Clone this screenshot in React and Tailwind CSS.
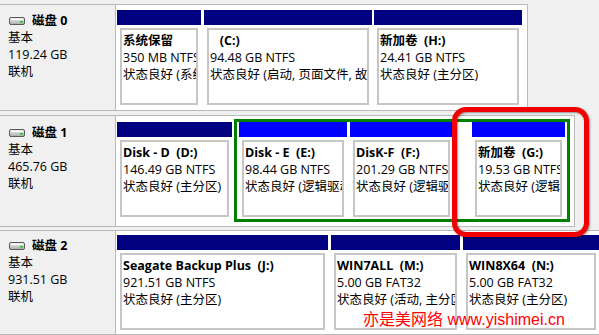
const NAVY = 'bg-[#000080]';
const BLUE = 'bg-[#0000ff]';

// small grey hard drive glyph in front of the disk name
const DriveIcon = () => (
    <svg width="16" height="8" viewBox="0 0 16 8" className="ml-[1px] shrink-0">
        <defs>
            <linearGradient id="hdd" x1="0" y1="0" x2="0" y2="1">
                <stop offset="0" stopColor="#f4f4f4" />
                <stop offset="1" stopColor="#a9a9a9" />
            </linearGradient>
        </defs>
        <rect x="0.5" y="0.5" width="15" height="7" rx="1.5" fill="url(#hdd)" stroke="#5a5a5a" />
        <line x1="2" y1="2.5" x2="14" y2="2.5" stroke="#ffffff" strokeWidth="1" />
        <rect x="11" y="4" width="3" height="1.6" fill="#36c236" />
    </svg>
);

const DiskInfo = ({ name, size, pt }) => (
    <div className={`w-[116px] shrink-0 bg-[#f0f0f0] border-r border-[#b9b9b9] pl-[8px] leading-[17px] ${pt}`}>
        <div className="flex items-center gap-[7px] h-[17px]">
            <DriveIcon />
            <span className="font-bold">{name}</span>
        </div>
        <div>基本</div>
        <div>{size}</div>
        <div>联机</div>
    </div>
);

const Partition = ({ w, bar, name, size, status, className = '' }) => (
    <div className={`flex flex-col shrink-0 bg-white ${className}`} style={{ width: w }}>
        <div className={`h-[15px] ${bar}`} />
        <div className="px-[3px] pt-[3px]">
            <div className="h-[77px] border-2 border-[#c6c6c6] pl-[1px] pt-[2px] leading-[17px] overflow-hidden whitespace-pre">
                <div className="font-bold">{name}</div>
                <div>{size}</div>
                <div>{status}</div>
            </div>
        </div>
    </div>
);

export default function App() {
    return (
        <div className="relative w-[599px] h-[335px] overflow-hidden bg-[#f0f0f0] pt-[4px] text-[12.5px] text-black font-['Open_Sans','Noto_Sans_CJK_SC',sans-serif]">
            {/* 磁盘 0 */}
            <div className="flex w-[528px] h-[107px] border-y border-r border-[#b9b9b9] bg-white">
                <DiskInfo name="磁盘 0" size="119.24 GB" pt="pt-[7px]" />
                <div className="flex items-start pl-[1px] pt-[5px]">
                    <Partition w={84} bar={NAVY} name="系统保留" size="350 MB NTFS" status="状态良好 (系统, 活动, 主分区)" />
                    <Partition w={168} bar={NAVY} className="ml-[3px]" name="   (C:)" size="94.48 GB NTFS" status="状态良好 (启动, 页面文件, 故障转储, 主分区)" />
                    <Partition w={148} bar={NAVY} className="ml-[2px]" name="新加卷  (H:)" size="24.41 GB NTFS" status="状态良好 (主分区)" />
                </div>
            </div>

            {/* 磁盘 1 */}
            <div className="flex w-[575px] h-[112px] mt-[4px] border-y border-r border-[#b9b9b9] bg-white">
                <DiskInfo name="磁盘 1" size="465.76 GB" pt="pt-[8px]" />
                <div className="flex items-start pl-[1px] pt-[3px]">
                    <Partition w={115} bar={NAVY} className="mt-[3px]" name="Disk - D  (D:)" size="146.49 GB NTFS" status="状态良好 (主分区)" />
                    <div className="flex ml-[2px] border-[3px] border-[#008000] bg-white px-[2px] pb-[2px]">
                        <Partition w={108} bar={BLUE} name="Disk - E  (E:)" size="98.44 GB NTFS" status="状态良好 (逻辑驱动器)" />
                        <Partition w={103} bar={BLUE} className="ml-[3px]" name="DisK-F  (F:)" size="201.29 GB NTFS" status="状态良好 (逻辑驱动器)" />
                        <Partition w={93} bar={BLUE} className="ml-[19px]" name="新加卷  (G:)" size="19.53 GB NTFS" status="状态良好 (逻辑驱动器)" />
                    </div>
                </div>
            </div>

            {/* 磁盘 2 */}
            <div className="flex w-[599px] h-[105px] mt-[3px] border-y border-[#b9b9b9] bg-white">
                <DiskInfo name="磁盘 2" size="931.51 GB" pt="pt-[6px]" />
                <div className="flex items-start pl-[1px] pt-[4px]">
                    <Partition w={211} bar={NAVY} name="Seagate Backup Plus  (J:)" size="921.51 GB NTFS" status="状态良好 (主分区)" />
                    <Partition w={129} bar={NAVY} className="ml-[3px]" name="WIN7ALL  (M:)" size="5.00 GB FAT32" status="状态良好 (活动, 主分区)" />
                    <Partition w={136} bar={NAVY} className="ml-[3px]" name="WIN8X64  (N:)" size="5.00 GB FAT32" status="状态良好 (主分区)" />
                </div>
            </div>

            {/* annotation ring around G: */}
            <div className="absolute left-[452px] top-[107px] w-[137px] h-[130px] border-[5px] border-[#f00000] rounded-[14px] shadow-[inset_1px_1px_2px_rgba(0,0,0,0.4),1px_1px_2px_rgba(0,0,0,0.4)]" />

            {/* watermark */}
            <div className="absolute left-[363px] top-[310px] leading-[20px] text-[16px] text-[#ff0000] whitespace-nowrap font-['Liberation_Sans','Noto_Sans_CJK_SC',sans-serif]">
                亦是美网络 www.yishimei.cn
            </div>
        </div>
    );
}
